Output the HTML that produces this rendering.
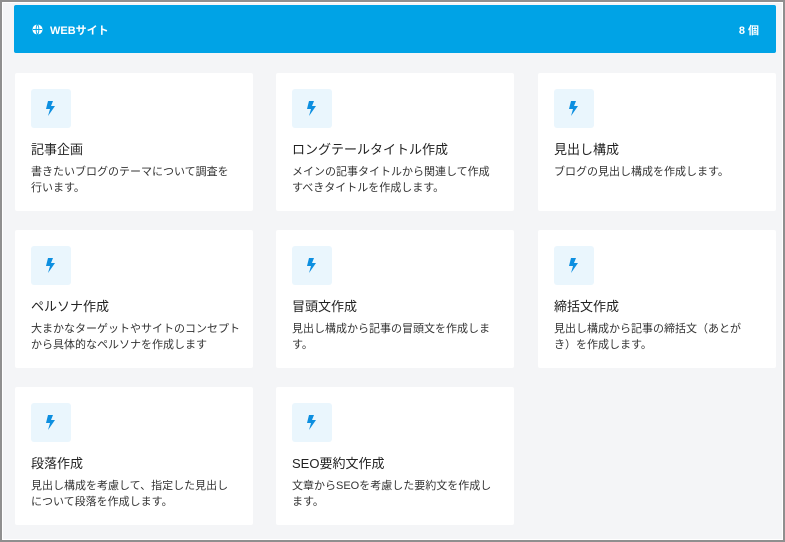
<!DOCTYPE html>
<html><head><meta charset="utf-8"><style>
*{box-sizing:border-box;margin:0;padding:0}
body{width:785px;height:542px;overflow:hidden;font-family:"Liberation Sans","Noto Sans CJK JP",sans-serif;background:#fff}
.frame{position:absolute;left:0;top:0;width:785px;height:542px;border:2px solid #8f8f8f;border-right-width:2px;background:#f4f5f7;box-shadow:inset 0 0 0 1px #fff}
.hdr{position:absolute;left:14px;top:5px;width:762px;height:48px;background:#00a3e6;border-radius:2px;color:#fff;font-weight:bold;font-size:11px}
.hdr .t{position:absolute;left:36px;top:17px}
.hdr .n{position:absolute;right:17px;top:17px}
.hdr svg{position:absolute;left:18px;top:19px}
.card{position:absolute;width:238px;height:138px;background:#fff;border-radius:2px}
.ic{position:absolute;left:16px;top:16px;width:40px;height:39px;background:#eaf6fd;border-radius:3px}
.ic svg{position:absolute;left:14px;top:12px}
.ti{position:absolute;left:16px;top:66px;font-size:13px;color:#222}
.de{position:absolute;left:16px;top:91px;width:201px;font-size:11px;line-height:16px;color:#333}
</style></head><body><div class="frame"></div>
<div class="hdr"><svg width="11" height="11" viewBox="0 0 12 12"><circle cx="6" cy="6" r="5.5" fill="#fff"/><path d="M1 6h10M6 .5c-2 2-2 9 0 11M6 .5c2 2 2 9 0 11" stroke="#00a3e6" stroke-width="1" fill="none"/></svg><span class="t">WEBサイト</span><span class="n">8 個</span></div>
<div class="card" style="left:15px;top:73px"><div class="ic"><svg width="11" height="15" viewBox="0 0 11 15"><path d="M3 0h5L6 5h4L3 15l2-7H1z" fill="#0d8fe0"/></svg></div><div class="ti">記事企画</div><div class="de">書きたいブログのテーマについて調査を行います。</div></div>
<div class="card" style="left:276px;top:73px"><div class="ic"><svg width="11" height="15" viewBox="0 0 11 15"><path d="M3 0h5L6 5h4L3 15l2-7H1z" fill="#0d8fe0"/></svg></div><div class="ti">ロングテールタイトル作成</div><div class="de">メインの記事タイトルから関連して作成すべきタイトルを作成します。</div></div>
<div class="card" style="left:538px;top:73px"><div class="ic"><svg width="11" height="15" viewBox="0 0 11 15"><path d="M3 0h5L6 5h4L3 15l2-7H1z" fill="#0d8fe0"/></svg></div><div class="ti">見出し構成</div><div class="de">ブログの見出し構成を作成します。</div></div>
<div class="card" style="left:15px;top:230px"><div class="ic"><svg width="11" height="15" viewBox="0 0 11 15"><path d="M3 0h5L6 5h4L3 15l2-7H1z" fill="#0d8fe0"/></svg></div><div class="ti">ペルソナ作成</div><div class="de" style="width:215px">大まかなターゲットやサイトのコンセプトから具体的なペルソナを作成します</div></div>
<div class="card" style="left:276px;top:230px"><div class="ic"><svg width="11" height="15" viewBox="0 0 11 15"><path d="M3 0h5L6 5h4L3 15l2-7H1z" fill="#0d8fe0"/></svg></div><div class="ti">冒頭文作成</div><div class="de">見出し構成から記事の冒頭文を作成します。</div></div>
<div class="card" style="left:538px;top:230px"><div class="ic"><svg width="11" height="15" viewBox="0 0 11 15"><path d="M3 0h5L6 5h4L3 15l2-7H1z" fill="#0d8fe0"/></svg></div><div class="ti">締括文作成</div><div class="de">見出し構成から記事の締括文（あとがき）を作成します。</div></div>
<div class="card" style="left:15px;top:387px"><div class="ic"><svg width="11" height="15" viewBox="0 0 11 15"><path d="M3 0h5L6 5h4L3 15l2-7H1z" fill="#0d8fe0"/></svg></div><div class="ti">段落作成</div><div class="de">見出し構成を考慮して、指定した見出しについて段落を作成します。</div></div>
<div class="card" style="left:276px;top:387px"><div class="ic"><svg width="11" height="15" viewBox="0 0 11 15"><path d="M3 0h5L6 5h4L3 15l2-7H1z" fill="#0d8fe0"/></svg></div><div class="ti">SEO要約文作成</div><div class="de">文章からSEOを考慮した要約文を作成します。</div></div>
</body></html>
